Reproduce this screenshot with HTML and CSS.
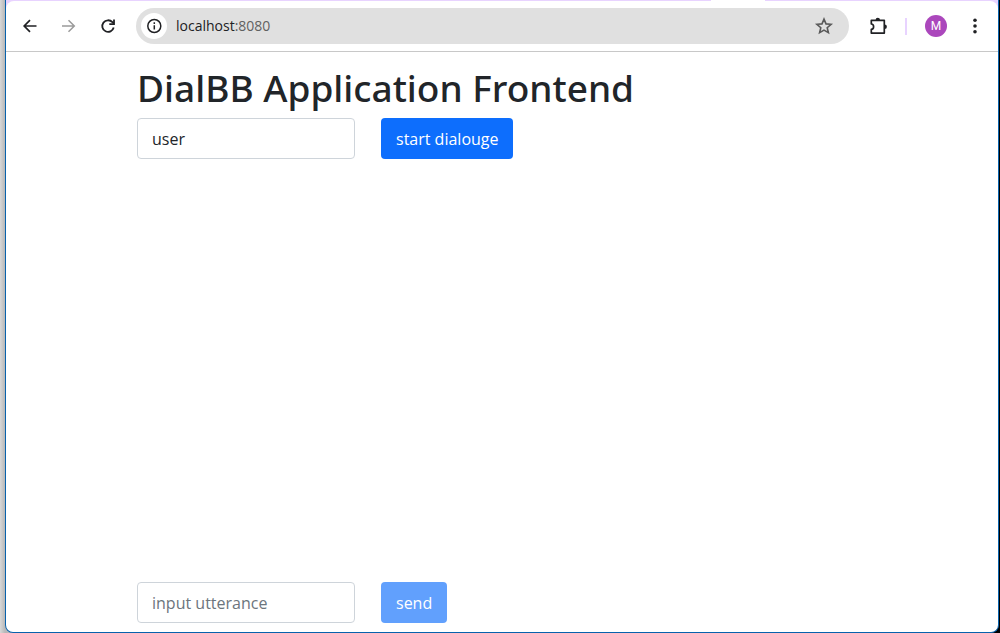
FILE: index.html
```html
<!DOCTYPE html>
<html lang="en">
<head>
<meta charset="utf-8">
<title>DialBB Application Frontend</title>
<link rel="stylesheet" href="styles.css">
</head>
<body>
<div class="window">
  <div class="tab-strip"><span class="tab-foot"></span></div>
  <header class="toolbar">
    <nav class="nav-buttons" aria-label="Navigation">
      <button class="icon-button" aria-label="Back"><svg width="20" height="20" viewBox="0 0 20 20" fill="none" stroke="#202124" stroke-width="1.7"><path d="M16.5 10H4.2M10 4.2L4.2 10l5.800 5.800"/></svg></button>
      <button class="icon-button" aria-label="Forward" disabled><svg width="20" height="20" viewBox="0 0 20 20" fill="none" stroke="#9b9b9b" stroke-width="1.500"><path d="M3 10h12.300M9.500 4.200l5.800 5.800-5.800 5.800"/></svg></button>
      <button class="icon-button" aria-label="Reload"><svg width="20" height="20" viewBox="0 0 20 20" fill="none" stroke="#202124" stroke-width="1.800"><path d="M15.700 11.500a5.800 5.800 0 1 1-1.300-5.300L16 7.700"/><path d="M16 3.500v4.700h-4.700"/></svg></button>
    </nav>
    <div class="address-bar">
      <button class="site-info" aria-label="Site information"><svg width="16" height="16" viewBox="0 0 16 16" fill="none" stroke="#202124" stroke-width="1.500"><circle cx="8.300" cy="8" r="6.500"/><path d="M8.300 7.200v4.300M8.300 4.300v1.600"/></svg></button>
      <span class="url">localhost<span class="port">:8080</span></span>
      <button class="bookmark" aria-label="Bookmark this page"><svg width="20" height="20" viewBox="0 0 20 20" fill="none" stroke="#5a5a5a" stroke-width="1.600"><path d="M10 3.100l2 4.800 5.100.4-3.900 3.400 1.200 5-4.400-2.600-4.400 2.600 1.200-5-3.900-3.400 5.100-.4z"/></svg></button>
    </div>
    <div class="tools">
      <button class="icon-button" aria-label="Extensions"><svg width="20" height="20" viewBox="0 0 20 20"><path d="M3.300 4.300h13V17.100h-13v-3.700c1.500-.2 2.300-1.300 2.300-2.700S4.800 8.100 3.300 8z" fill="none" stroke="#202124" stroke-width="1.700" stroke-linejoin="round"/><path d="M7.600 4a2.200 2.200 0 0 1 4.400 0zM16.700 8.500a2.200 2.200 0 0 1 0 4.400z" fill="#202124"/></svg></button>
      <span class="divider"></span>
      <button class="avatar" aria-label="Profile">M</button>
      <button class="icon-button" aria-label="Menu"><svg width="20" height="20" viewBox="0 0 20 20" fill="#202124"><circle cx="10" cy="4.200" r="1.800"/><circle cx="10" cy="10" r="1.800"/><circle cx="10" cy="15.800" r="1.800"/></svg></button>
    </div>
  </header>
  <main class="page">
    <h1 class="title">DialBB Application Frontend</h1>
    <form class="form-row">
      <input class="field" type="text" value="user" aria-label="User ID">
      <button class="action" type="button">start dialouge</button>
    </form>
    <section class="dialogue" aria-label="Dialogue"></section>
    <form class="form-row">
      <input class="field" type="text" placeholder="input utterance" aria-label="Utterance">
      <button class="action" type="button" disabled>send</button>
    </form>
  </main>
</div>
</body>
</html>
```
FILE: styles.css
```css
* {
  box-sizing: border-box;
}

body {
  display: flex;
  min-height: 100vh;
  margin: 0;
  padding: 0 1px 0 5px;
  background: linear-gradient(90deg, #d8d8d8 0, #b8b8b8 5px, #000 50%);
  color: #212529;
  font-family: "Open Sans", "Noto Sans", sans-serif;
}

button,
input {
  margin: 0;
  font-family: inherit;
}

button {
  padding: 0;
  border: 0;
  background: none;
}

svg {
  display: block;
}

.window {
  display: flex;
  flex: 1;
  flex-direction: column;
  overflow: hidden;
  border: 1px solid #0862ac;
  border-top: 0;
  border-radius: 0 0 8px 8px;
  background: #fff;
}

.tab-strip {
  display: flex;
  justify-content: flex-end;
  height: 8px;
  margin-bottom: -7px;
  padding-right: 233px;
  background: #e8d3ff;
}

.tab-foot {
  width: 54px;
  height: 1px;
  background: #fff;
}

.toolbar {
  display: flex;
  align-items: center;
  height: 51px;
  padding: 0 13px 0 14px;
  border-bottom: 1px solid #c8c8c8;
  border-radius: 8px 8px 0 0;
  background: #fff;
}

.nav-buttons {
  display: flex;
  gap: 19px;
}

.icon-button {
  width: 20px;
  height: 20px;
}

.address-bar {
  display: flex;
  flex: 1;
  align-items: center;
  height: 36px;
  margin: 0 19px 0 18px;
  padding: 0 15px 0 5px;
  border-radius: 18px;
  background: #e0e0e0;
}

.site-info {
  display: grid;
  width: 26px;
  height: 26px;
  place-items: center;
  border-radius: 50%;
  background: #fff;
}

.url {
  flex: 1;
  margin-left: 9px;
  color: #202124;
  font-size: 14px;
  line-height: 20px;
}

.port {
  color: #606060;
}

.tools {
  display: flex;
  align-items: center;
}

.divider {
  width: 2px;
  height: 17px;
  margin: 0 18px 0 17px;
  background: #e8d3ff;
}

.avatar {
  width: 22px;
  height: 22px;
  margin-right: 18px;
  border-radius: 50%;
  background: #ab47bc;
  color: #fff;
  font-family: Roboto, sans-serif;
  font-size: 12px;
  line-height: 22px;
}

.page {
  display: flex;
  flex: 1;
  flex-direction: column;
  padding: 12px 131px 9px;
}

.title {
  margin: 0 0 6px;
  font-family: "Noto Sans", sans-serif;
  font-size: 37px;
  font-weight: 500;
  line-height: 48px;
}

.form-row {
  display: flex;
  gap: 26px;
}

.field {
  width: 218px;
  height: 41px;
  padding: 1px 14px 0;
  border: 1px solid #ced4da;
  border-radius: 4px;
  background: #fff;
  color: #212529;
  font-size: 16px;
}

.field::placeholder {
  color: #6c757d;
  opacity: 1;
}

.action {
  height: 41px;
  padding: 1px 15px 0;
  border-radius: 4px;
  background: #0d6efd;
  color: #fff;
  font-size: 16px;
}

.action:disabled {
  opacity: 0.65;
}

.dialogue {
  flex: 1;
}
```
